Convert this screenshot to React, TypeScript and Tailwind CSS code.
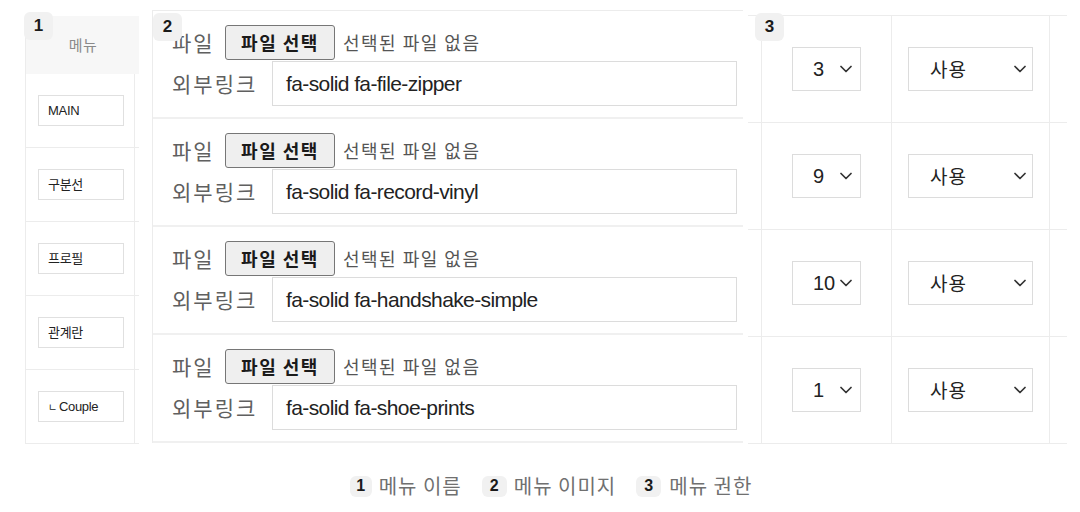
import React from "react";

const KR = { fontFamily: '"Noto Sans CJK KR", "Noto Sans", sans-serif' };
const LAT = { fontFamily: '"Liberation Sans", "Noto Sans CJK KR", Arial, sans-serif' };

function Badge({ n, cls }: { n: string; cls: string }) {
  return (
    <div
      className={`flex items-center justify-center rounded-[6px] bg-[#f1f1f1] text-[#1a1a1a] font-semibold ${cls}`}
      style={LAT}
    >
      {n}
    </div>
  );
}

function Chevron() {
  return (
    <svg width="12" height="8" viewBox="0 0 12 8" className="shrink-0">
      <path d="M1 1.5 L6 6.5 L11 1.5" fill="none" stroke="#333" strokeWidth="1.7" strokeLinecap="round" strokeLinejoin="round" />
    </svg>
  );
}

const menus = ["MAIN", "구분선", "프로필", "관계란", "ㄴCouple"];
const links = [
  "fa-solid fa-file-zipper",
  "fa-solid fa-record-vinyl",
  "fa-solid fa-handshake-simple",
  "fa-solid fa-shoe-prints",
];
const orders = ["3", "9", "10", "1"];

export default function App() {
  return (
    <div className="w-[1080px] h-[512px] bg-white overflow-hidden" style={KR}>
      <div className="flex items-start h-[450px]">
        {/* Panel 1 */}
        <div className="relative ml-[25px] mt-[16px] w-[114px] border-l border-[#ececec]">
          <div className="h-[58px] bg-[#f7f7f7] flex items-center justify-center pl-[1px]">
            <span className="text-[15px] text-[#8a8a8a] tracking-[0.5px]" style={KR}>메뉴</span>
          </div>
          {menus.map((m) => (
            <div key={m} className="h-[74px] border-b border-[#ececec] flex">
              <div className="w-[109px] border-r border-[#ececec] flex items-center pl-[12px]">
                <div className="w-[86px] h-[31px] border border-[#e0e0e0] flex items-center pl-[9px] text-[13px] text-[#222] tracking-[-0.3px]" style={LAT}>
                  {m === "ㄴCouple" ? (
                    <>
                      <span className="text-[10px] mr-[2px]" style={KR}>ㄴ</span>
                      <span>Couple</span>
                    </>
                  ) : (
                    m
                  )}
                </div>
              </div>
            </div>
          ))}
          <Badge n="1" cls="absolute left-[-2px] top-[-4px] w-[29px] h-[28px] text-[17px]" />
        </div>

        {/* Panel 2 */}
        <div className="relative ml-[13px] mt-[10px] w-[591px] border-l border-t border-[#ececec]">
          {links.map((l) => (
            <div key={l} className="h-[108px] border-b-2 border-[#f0f0f0] pl-[19px] pt-[14px]">
              <div className="flex items-center h-[35px]">
                <span className="w-[53px] text-[21px] text-[#606060] leading-none tracking-[2px]" style={KR}>파일</span>
                <div className="w-[110px] h-[35px] rounded-[3px] border border-[#767676] bg-[#efefef] flex items-center justify-center text-[18px] font-bold text-[#1a1a1a] tracking-[1.5px]" style={KR}>
                  파일 선택
                </div>
                <span className="ml-[8px] text-[18px] text-[#555] tracking-[1.5px]" style={KR}>선택된 파일 없음</span>
              </div>
              <div className="flex items-center mt-[1px]">
                <span className="w-[100px] text-[21px] text-[#606060] leading-none tracking-[2px]" style={KR}>외부링크</span>
                <div className="w-[465px] h-[45px] border border-[#dcdcdc] flex items-center pl-[13px] text-[21px] text-[#222] tracking-[-0.6px]" style={LAT}>
                  {l}
                </div>
              </div>
            </div>
          ))}
          <Badge n="2" cls="absolute left-[0px] top-[2px] w-[29px] h-[28px] text-[17px]" />
        </div>

        {/* Panel 3 */}
        <div className="relative ml-[5px] mt-[15px] w-[319px] border-t border-[#ececec]">
          {orders.map((o, i) => (
            <div key={i} className="flex h-[107px] border-b border-[#ececec]">
              <div className="w-[13px]" />
              <div className="w-[130px] border-l border-[#ececec] flex items-center justify-center">
                <div className="w-[69px] h-[44px] border border-[#dcdcdc] flex items-center pl-[20px] pr-[8px] justify-between text-[20px] text-[#222]" style={LAT}>
                  <span>{o}</span>
                  <Chevron />
                </div>
              </div>
              <div className="w-[159px] border-l border-r border-[#ececec] flex items-center justify-center">
                <div className="w-[125px] h-[44px] border border-[#dcdcdc] flex items-center pl-[21px] pr-[6px] justify-between text-[19px] text-[#222] tracking-[1px]" style={KR}>
                  <span>사용</span>
                  <Chevron />
                </div>
              </div>
              <div className="w-[16px]" />
            </div>
          ))}
          <Badge n="3" cls="absolute left-[7px] top-[-3px] w-[29px] h-[28px] text-[17px]" />
        </div>
      </div>

      {/* Legend */}
      <div className="flex items-center justify-center pl-[22px] mt-[25px] h-[22px]">
        <Badge n="1" cls="w-[22px] h-[21px] text-[16px]" />
        <span className="ml-[7px] text-[20px] text-[#707070] leading-none tracking-[1px]" style={KR}>메뉴 이름</span>
        <Badge n="2" cls="ml-[20px] w-[25px] h-[21px] text-[16px]" />
        <span className="ml-[7px] text-[20px] text-[#707070] leading-none tracking-[1px]" style={KR}>메뉴 이미지</span>
        <Badge n="3" cls="ml-[20px] w-[25px] h-[21px] text-[16px]" />
        <span className="ml-[8px] text-[20px] text-[#707070] leading-none tracking-[1px]" style={KR}>메뉴 권한</span>
      </div>
    </div>
  );
}
